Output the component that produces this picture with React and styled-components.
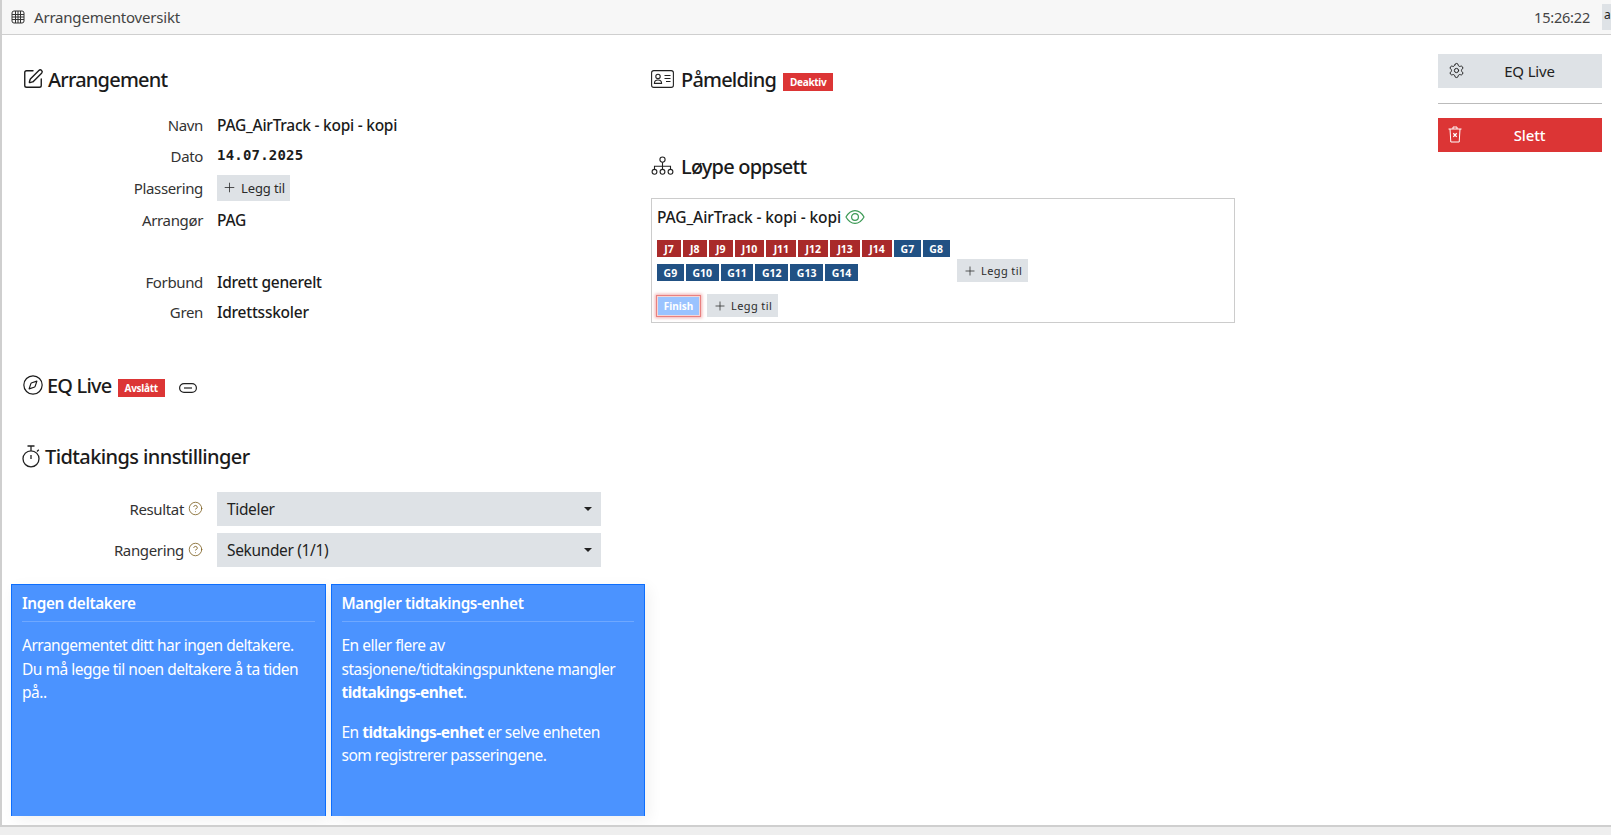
import React from 'react';
import styled, { createGlobalStyle } from 'styled-components';
import {
  CircleHelp,
  Compass,
  Plus,
  Settings,
  SquarePen,
} from 'lucide-react';

const GlobalStyle = createGlobalStyle`
  html, body {
    margin: 0;
    height: 100%;
    overflow: hidden;
    background: #eeeeee;
  }
  body {
    font-family: "Noto Sans", "Open Sans", sans-serif;
    color: #212529;
  }
`;

const Page = styled.div`
  box-sizing: border-box;
  width: 1611px;
  height: 827px;
  background: #fff;
  border-left: 2px solid #cfcfcf;
  border-bottom: 2px solid #cfcfcf;
  display: flex;
  flex-direction: column;
  overflow: hidden;
`;

const TitleBar = styled.div`
  flex: none;
  height: 35px;
  box-sizing: border-box;
  background: #f7f7f7;
  border-bottom: 1px solid #cfcfcf;
  display: flex;
  align-items: center;
  padding-left: 9px;
  gap: 9px;
  font-size: 15px;
  letter-spacing: -0.2px;
  color: #444;
`;

const Clock = styled.span`
  margin-left: auto;
  margin-right: 3px;
  font-size: 14.5px;
  letter-spacing: -0.2px;
`;

const UserStub = styled.span`
  width: 9px;
  height: 26px;
  background: #dee2e6;
  overflow: hidden;
  font-size: 12px;
  line-height: 22px;
  padding-left: 2px;
  box-sizing: border-box;
  color: #222;
`;

const Body = styled.div`
  flex: 1;
  min-height: 0;
  display: flex;
`;

const LeftColumn = styled.div`
  flex: none;
  width: 643px;
  box-sizing: border-box;
  padding: 30px 0 0 9px;
  display: flex;
  flex-direction: column;
`;

const MiddleColumn = styled.div`
  flex: none;
  width: 793px;
  box-sizing: border-box;
  padding: 30px 0 0 6px;
  display: flex;
  flex-direction: column;
`;

const SideColumn = styled.div`
  flex: none;
  width: 164px;
  box-sizing: border-box;
  padding-top: 19px;
  display: flex;
  flex-direction: column;
`;

const Heading = styled.h2`
  margin: ${(p) => p.$top || 0}px 0 0 ${(p) => p.$indent || 0}px;
  height: 28px;
  display: flex;
  align-items: center;
  gap: ${(p) => p.$gap || 4}px;
  font-size: 20px;
  font-weight: 500;
  letter-spacing: ${(p) => p.$spacing || -0.8}px;
  color: #1b1b1b;
  white-space: nowrap;
`;

const Badge = styled.span`
  background: #dc3535;
  color: #fff;
  font-size: 10px;
  font-weight: 700;
  letter-spacing: -0.3px;
  height: 18px;
  display: inline-flex;
  align-items: center;
  padding: 0 7px;
  margin: 5px 0 0 ${(p) => p.$left || 0}px;
`;

const InfoGrid = styled.div`
  display: grid;
  grid-template-columns: 192px 1fr;
  column-gap: 14px;
  margin-top: ${(p) => p.$top}px;
`;

const Label = styled.div`
  height: ${(p) => p.$height}px;
  display: flex;
  align-items: center;
  justify-content: flex-end;
  gap: 4px;
  font-size: 15px;
  letter-spacing: -0.35px;
  color: #333;
`;

const Value = styled.div`
  height: ${(p) => p.$height}px;
  display: flex;
  align-items: center;
  font-size: 15.5px;
  font-weight: 500;
  letter-spacing: -0.25px;
  color: #1b1b1b;
`;

const DateValue = styled(Value)`
  font-family: "DejaVu Sans Mono", "Liberation Mono", monospace;
  font-size: 14px;
  font-weight: 700;
  letter-spacing: 0.2px;
  padding-bottom: 2px;
  box-sizing: border-box;
`;

const AddButton = styled.button`
  border: 0;
  border-radius: 0;
  background: #dee2e6;
  height: ${(p) => p.$height || 23}px;
  padding: 0 ${(p) => p.$pad || 5}px;
  margin-top: ${(p) => p.$top || 0}px;
  display: inline-flex;
  align-items: center;
  gap: 4px;
  font-family: inherit;
  font-size: ${(p) => p.$size || 13}px;
  letter-spacing: ${(p) => p.$spacing || -0.1}px;
  color: #2b2b2b;
  flex: none;
`;

const SelectBox = styled.div`
  width: 384px;
  height: 34px;
  background: #dee2e6;
  box-sizing: border-box;
  padding: 0 9px 0 10px;
  display: flex;
  align-items: center;
  justify-content: space-between;
  font-size: 15.5px;
  font-weight: 400;
  letter-spacing: -0.35px;
  color: #222;
`;

const Caret = styled.span`
  width: 0;
  height: 0;
  border-left: 4px solid transparent;
  border-right: 4px solid transparent;
  border-top: 4px solid #222;
`;

const HelpIcon = styled(CircleHelp)`
  color: #7b5e1f;
  flex: none;
`;

const CardRow = styled.div`
  margin-top: 14px;
  display: flex;
  gap: 5px;
  flex: 1;
  min-height: 0;
  padding-bottom: 9px;
`;

const InfoCard = styled.div`
  width: 315px;
  box-sizing: border-box;
  background: #4b93ff;
  border: 1px solid #0d6efd;
  border-bottom: 0;
  padding: 0 10px;
  color: #fff;
  font-size: 15.5px;
  letter-spacing: -0.5px;
  line-height: 23.5px;
  box-shadow: 4px 4px 14px rgba(0, 0, 0, 0.06);
`;

const CardTitle = styled.div`
  height: 36px;
  line-height: 36px;
  border-bottom: 1px solid rgba(255, 255, 255, 0.2);
  font-size: 15.3px;
  font-weight: 600;
  letter-spacing: -0.35px;
  margin-bottom: 12px;
  white-space: nowrap;
`;

const CardText = styled.p`
  margin: 0 0 16px;
  padding-right: 4px;
`;

const CourseBox = styled.div`
  margin-top: 18px;
  width: 584px;
  height: 125px;
  box-sizing: border-box;
  border: 1px solid #ccc;
  padding: 0 5px;
`;

const CourseTitle = styled.div`
  height: 35px;
  display: flex;
  align-items: center;
  gap: 4px;
  font-size: 15.5px;
  font-weight: 500;
  letter-spacing: -0.1px;
  color: #1b1b1b;
`;

const ClassArea = styled.div`
  margin-top: 6px;
  display: flex;
  align-items: flex-start;
  gap: 7px;
`;

const ClassRows = styled.div`
  width: 293px;
  display: flex;
  flex-direction: column;
  gap: 7px;
`;

const ClassRow = styled.div`
  display: flex;
  gap: 2px;
`;

const ClassTag = styled.span`
  height: 17px;
  box-sizing: border-box;
  padding: 0 ${(p) => (p.$kind === 'j' ? 7.2 : 6.6)}px;
  display: inline-flex;
  align-items: center;
  justify-content: center;
  background: ${(p) => (p.$kind === 'j' ? '#a92a2a' : '#215184')};
  color: #fff;
  font-size: 10.5px;
  font-weight: 700;
`;

const FinishRow = styled.div`
  margin-top: 12px;
  display: flex;
  align-items: center;
  gap: 7px;
`;

const FinishTag = styled.span`
  width: 43px;
  height: 20px;
  display: inline-flex;
  align-items: center;
  justify-content: center;
  background: #9ac3ff;
  border: 1px solid #f3d6d6;
  box-sizing: border-box;
  box-shadow: 0 0 0 1px #e98080, 0 0 3px 2px rgba(220, 53, 53, 0.4);
  color: #fff;
  font-size: 10px;
  font-weight: 700;
`;

const ActionButton = styled.button`
  position: relative;
  width: 164px;
  height: 34px;
  border: 0;
  border-radius: 0;
  background: ${(p) => (p.$danger ? '#dc3535' : '#dee2e6')};
  color: ${(p) => (p.$danger ? '#fff' : '#222')};
  font-family: inherit;
  font-size: 15px;
  letter-spacing: -0.15px;
  font-weight: ${(p) => (p.$danger ? 500 : 400)};
  display: flex;
  align-items: center;
  justify-content: center;
  padding: 0 0 0 19px;
`;

const ActionIcon = styled.span`
  position: absolute;
  left: 10px;
  top: 8px;
  display: flex;
`;

const Divider = styled.hr`
  width: 100%;
  margin: 15px 0 14px;
  border: 0;
  border-top: 1px solid #bbb;
`;

const LinkMark = styled.svg`
  margin: 6px 0 0 11px;
`;

const ManIcon = () => (
  <svg width="23" height="18" viewBox="0 0 23 18" fill="none" stroke="#222" strokeWidth="1.1">
    <rect x="0.6" y="0.6" width="21.8" height="16.8" rx="2.2" />
    <circle cx="7" cy="6.4" r="2.2" />
    <path d="M3.4 13.4c0-2.4 1.6-3.4 3.6-3.4s3.6 1 3.6 3.4z" />
    <path d="M13.5 5.5h6M13.5 8.5h6M15 11.5h4.5" />
  </svg>
);

const GridIcon = () => (
  <svg width="14" height="14" viewBox="0 0 14 14" fill="none" stroke="#333" strokeWidth="1">
    <rect x="1" y="1" width="12" height="12" rx="2" />
    <path d="M1 4.500h12M1 7h12M1 9.500h12M4.500 1v12M7 1v12M9.500 1v12" />
  </svg>
);

const TreeIcon = () => (
  <svg width="23" height="20" viewBox="0 0 23 20" fill="none" stroke="#222" strokeWidth="1.1">
    <circle cx="11.5" cy="3.6" r="2.6" />
    <path d="M11.5 6.2v4M3.5 13.4v-3.2h16v3.2M11.5 10.2v3.2" />
    <circle cx="3.5" cy="15.8" r="2.4" />
    <circle cx="11.5" cy="15.8" r="2.4" />
    <circle cx="19.5" cy="15.8" r="2.4" />
  </svg>
);

const TrashIcon = () => (
  <svg width="14" height="17" viewBox="0 0 14 17" fill="none" stroke="#fff" strokeWidth="1">
    <path d="M0.5 3h13M5 3V1h4v2M2 3l.8 13h8.4L12 3" />
    <path d="M5.3 7.3l3.4 3.6M8.7 7.3l-3.4 3.6" strokeWidth="1.3" />
  </svg>
);

const LinkIcon = () => (
  <LinkMark width="18" height="10" viewBox="0 0 18 10" fill="none" stroke="#222" strokeWidth="1.2">
    <rect x="0.6" y="0.6" width="16.8" height="8.8" rx="4.4" />
    <path d="M5 5h8" />
  </LinkMark>
);

const RingEye = () => (
  <svg width="20" height="16" viewBox="0 0 20 16" fill="none" stroke="#3d9a56" strokeWidth="1.2">
    <path d="M1 8c2.2-4 5.2-6.4 9-6.4S16.800 4 19 8c-2.200 4-5.200 6.400-9 6.400S3.200 12 1 8z" />
    <circle cx="10" cy="8" r="3.400" />
  </svg>
);

const StopwatchIcon = () => (
  <svg width="19" height="23" viewBox="0 0 19 23" fill="none" stroke="#222" strokeWidth="1.3">
    <circle cx="9" cy="13.800" r="8" />
    <path d="M5.500 1h7M9 1v4.800M9 10v4M15 6.500l1.800-1.800" />
  </svg>
);

const firstRow = [
  ['J7', 'j'], ['J8', 'j'], ['J9', 'j'], ['J10', 'j'], ['J11', 'j'], ['J12', 'j'],
  ['J13', 'j'], ['J14', 'j'], ['G7', 'g'], ['G8', 'g'],
];
const secondRow = ['G9', 'G10', 'G11', 'G12', 'G13', 'G14'];

const App = () => (
  <>
    <GlobalStyle />
    <Page>
      <TitleBar>
        <GridIcon />
        Arrangementoversikt
        <Clock>15:26:22</Clock>
        <UserStub>a</UserStub>
      </TitleBar>
      <Body>
        <LeftColumn>
          <Heading $indent={11}>
            <SquarePen size={22} strokeWidth={1.5} />
            Arrangement
          </Heading>
          <InfoGrid $top={16}>
            <Label $height={31}>Navn</Label>
            <Value $height={31}>PAG_AirTrack - kopi - kopi</Value>
            <Label $height={31}>Dato</Label>
            <DateValue $height={31}>14.07.2025</DateValue>
            <Label $height={33}>Plassering</Label>
            <Value $height={33}>
              <AddButton $height={26}>
                <Plus size={15} strokeWidth={1.3} />
                Legg til
              </AddButton>
            </Value>
            <Label $height={31}>Arrangør</Label>
            <Value $height={31}>PAG</Value>
            <Label $height={31} />
            <Value $height={31} />
            <Label $height={31}>Forbund</Label>
            <Value $height={31}>Idrett generelt</Value>
            <Label $height={29}>Gren</Label>
            <Value $height={29}>Idrettsskoler</Value>
          </InfoGrid>
          <Heading $indent={11} $gap={3} $top={45}>
            <Compass size={22} strokeWidth={1.3} />
            EQ Live
            <Badge $left={3}>Avslått</Badge>
            <LinkIcon />
          </Heading>
          <Heading $indent={11} $gap={4} $top={43} $spacing={-0.6}>
            <StopwatchIcon />
            Tidtakings innstillinger
          </Heading>
          <InfoGrid $top={18}>
            <Label $height={41}>
              Resultat
              <HelpIcon size={15} strokeWidth={1.3} />
            </Label>
            <Value $height={41}>
              <SelectBox>
                Tideler
                <Caret />
              </SelectBox>
            </Value>
            <Label $height={41}>
              Rangering
              <HelpIcon size={15} strokeWidth={1.3} />
            </Label>
            <Value $height={41}>
              <SelectBox>
                Sekunder (1/1)
                <Caret />
              </SelectBox>
            </Value>
          </InfoGrid>
          <CardRow>
            <InfoCard>
              <CardTitle>Ingen deltakere</CardTitle>
              <CardText>
                Arrangementet ditt har ingen deltakere. Du må legge til noen deltakere å ta tiden på..
              </CardText>
            </InfoCard>
            <InfoCard>
              <CardTitle>Mangler tidtakings-enhet</CardTitle>
              <CardText>
                En eller flere av stasjonene/tidtakingspunktene mangler <b>tidtakings-enhet</b>.
              </CardText>
              <CardText>
                En <b>tidtakings-enhet</b> er selve enheten som registrerer passeringene.
              </CardText>
            </InfoCard>
          </CardRow>
        </LeftColumn>
        <MiddleColumn>
          <Heading $gap={7}>
            <ManIcon />
            Påmelding
            <Badge>Deaktiv</Badge>
          </Heading>
          <Heading $gap={7} $top={59}>
            <TreeIcon />
            Løype oppsett
          </Heading>
          <CourseBox>
            <CourseTitle>
              PAG_AirTrack - kopi - kopi
              <RingEye />
            </CourseTitle>
            <ClassArea>
              <ClassRows>
                <ClassRow>
                  {firstRow.map(([name, kind]) => (
                    <ClassTag key={name} $kind={kind}>{name}</ClassTag>
                  ))}
                </ClassRow>
                <ClassRow>
                  {secondRow.map((name) => (
                    <ClassTag key={name} $kind="g">{name}</ClassTag>
                  ))}
                </ClassRow>
              </ClassRows>
              <AddButton $height={23} $pad={6} $size={11} $spacing={0.4} $top={19}>
                <Plus size={14} strokeWidth={1.3} />
                Legg til
              </AddButton>
            </ClassArea>
            <FinishRow>
              <FinishTag>Finish</FinishTag>
              <AddButton $height={23} $pad={6} $size={11} $spacing={0.4}>
                <Plus size={14} strokeWidth={1.3} />
                Legg til
              </AddButton>
            </FinishRow>
          </CourseBox>
        </MiddleColumn>
        <SideColumn>
          <ActionButton>
            <ActionIcon><Settings size={17} strokeWidth={1.4} /></ActionIcon>
            EQ Live
          </ActionButton>
          <Divider />
          <ActionButton $danger>
            <ActionIcon><TrashIcon /></ActionIcon>
            Slett
          </ActionButton>
        </SideColumn>
      </Body>
    </Page>
  </>
);

export default App;
